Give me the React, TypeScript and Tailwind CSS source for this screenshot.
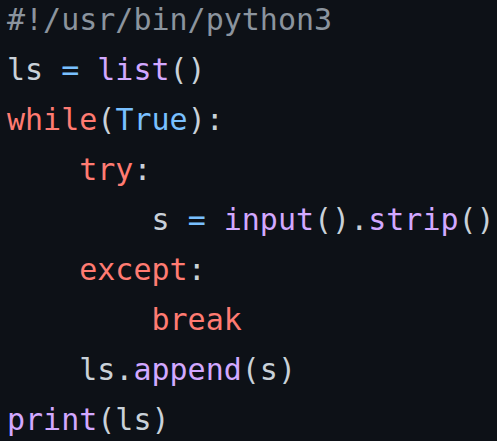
import React from "react";

const K = ({ children }: { children: React.ReactNode }) => <span className="text-[#ff7b72]">{children}</span>;
const F = ({ children }: { children: React.ReactNode }) => <span className="text-[#d2a8ff]">{children}</span>;
const C = ({ children }: { children: React.ReactNode }) => <span className="text-[#79c0ff]">{children}</span>;

export default function App() {
  return (
    <div className="w-[497px] h-[441px] overflow-hidden bg-[#0d1117] text-[#c9d1d9]">
      <pre
        className="m-0 pl-[7px] -mt-[5px] text-[30px] leading-[50px] whitespace-pre"
        style={{ fontFamily: '"DejaVu Sans Mono", monospace' }}
      >
        <div className="text-[#8b949e]">#!/usr/bin/python3</div>
        <div>ls <C>=</C> <F>list</F>()</div>
        <div><K>while</K>(<C>True</C>):</div>
        <div>    <K>try</K>:</div>
        <div>        s <C>=</C> <F>input</F>().<F>strip</F>()</div>
        <div>    <K>except</K>:</div>
        <div>        <K>break</K></div>
        <div>    ls.<F>append</F>(s)</div>
        <div><F>print</F>(ls)</div>
      </pre>
    </div>
  );
}
